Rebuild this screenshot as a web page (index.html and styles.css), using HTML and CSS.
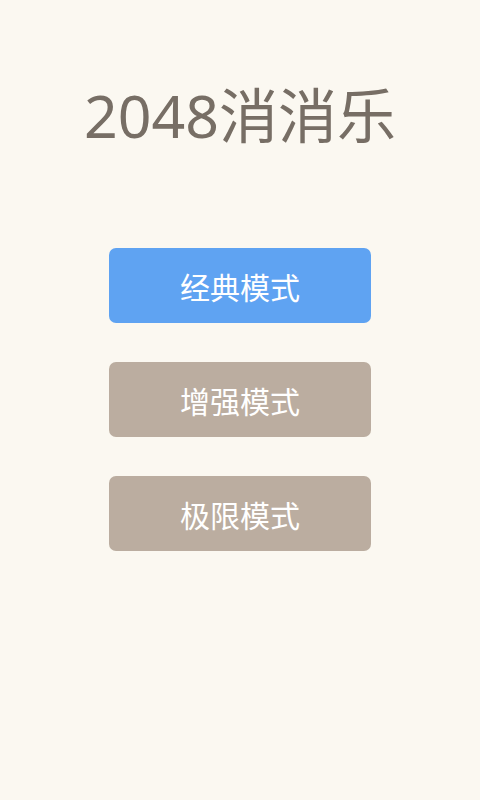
FILE: index.html
```html
<!DOCTYPE html>
<html lang="zh-CN">
<head>
    <meta charset="UTF-8">
    <title>2048消消乐</title>
    <link rel="stylesheet" href="styles.css">
</head>
<body>
<div class="menu">
    <h1 class="title">2048消消乐</h1>
    <div class="modes">
        <button class="mode mode-classic">经典模式</button>
        <button class="mode">增强模式</button>
        <button class="mode">极限模式</button>
    </div>
</div>
</body>
</html>
```

FILE: styles.css
```css
html, body {
    margin: 0;
    height: 100%;
    background-color: #fbf8f1;
    font-family: "Noto Sans", "Noto Sans CJK SC", sans-serif;
}
.menu {
    display: flex;
    flex-direction: column;
    align-items: center;
}
.title {
    margin: 79px 0 0 0;
    font-size: 59px;
    font-weight: normal;
    line-height: 72px;
    color: #776e65;
}
.modes {
    display: flex;
    flex-direction: column;
    gap: 39px;
    margin-top: 97px;
}
.mode {
    width: 262px;
    height: 75px;
    border: none;
    border-radius: 7px;
    background-color: #bbada0;
    color: #fff;
    font-family: inherit;
    font-size: 30px;
    cursor: pointer;
}
.mode-classic {
    background-color: #5fa3f2;
}
```
